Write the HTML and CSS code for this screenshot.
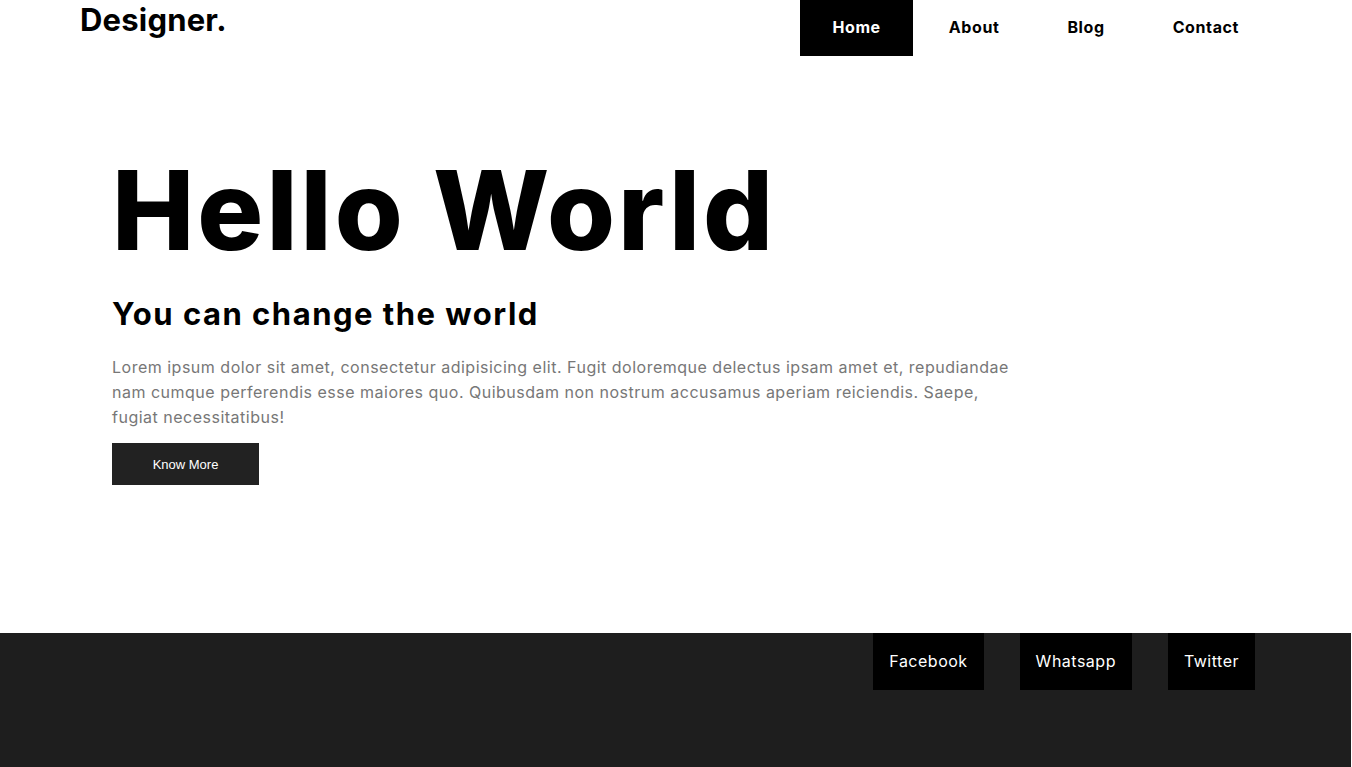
FILE: index.html
```html
<!DOCTYPE html>
<html lang="en">
<head>
<meta charset="utf-8">
<title>Designer.</title>
<link rel="stylesheet" href="styles.css">
</head>
<body>
<header class="topbar">
  <div class="logo">Designer.</div>
  <nav class="nav">
    <a class="nav-link active" href="#">Home</a>
    <a class="nav-link" href="#">About</a>
    <a class="nav-link" href="#">Blog</a>
    <a class="nav-link" href="#">Contact</a>
  </nav>
</header>
<main class="hero">
  <h1 class="hero-title">Hello World</h1>
  <h2 class="hero-sub">You can change the world</h2>
  <p class="hero-text">Lorem ipsum dolor sit amet, consectetur adipisicing elit. Fugit doloremque delectus ipsam amet et, repudiandae nam cumque perferendis esse maiores quo. Quibusdam non nostrum accusamus aperiam reiciendis. Saepe, fugiat necessitatibus!</p>
  <button class="btn">Know More</button>
</main>
<footer class="footer">
  <a class="social" href="#">Facebook</a>
  <a class="social" href="#">Whatsapp</a>
  <a class="social" href="#">Twitter</a>
</footer>
</body>
</html>
```
FILE: styles.css
```css
* { box-sizing: border-box; }
html, body { margin: 0; padding: 0; }
body {
  font-family: "Inter", "Open Sans", sans-serif;
  background: #fff;
  color: #000;
  width: 1351px;
}
a { text-decoration: none; color: inherit; }

.topbar {
  display: flex;
  justify-content: space-between;
  align-items: flex-start;
  height: 56px;
  padding: 0 80px 0 80px;
}
.logo {
  font-size: 31px;
  font-weight: 700;
  line-height: 40px;
  letter-spacing: 0.2px;
}
.nav {
  display: flex;
  gap: 4px;
}
.nav-link {
  display: block;
  padding: 0 32px;
  line-height: 55px;
  font-size: 16px;
  font-weight: 700;
  letter-spacing: 0.6px;
  color: #000;
}
.nav-link.active {
  background: #000;
  color: #fff;
  height: 56px;
}

.hero {
  height: 577px;
  padding: 89px 0 0 112px;
}
.hero-title {
  margin: 0;
  font-size: 110px;
  font-weight: 800;
  line-height: 130px;
  letter-spacing: 3px;
}
.hero-sub {
  margin: 15px 0 0;
  font-size: 31px;
  font-weight: 700;
  line-height: 48px;
  letter-spacing: 1.5px;
}
.hero-text {
  margin: 17px 0 0;
  width: 910px;
  font-size: 16px;
  line-height: 25px;
  letter-spacing: 0.5px;
  color: #777;
}
.btn {
  display: block;
  margin-top: 13px;
  width: 147px;
  height: 42px;
  border: none;
  background: #222;
  color: #fff;
  font-family: "Liberation Sans", Arial, sans-serif;
  font-size: 13px;
}

.footer {
  height: 134px;
  background: #1e1e1e;
  display: flex;
  justify-content: flex-end;
  align-items: flex-start;
  gap: 36px;
  padding-right: 96px;
}
.social {
  display: block;
  background: #000;
  color: #fff;
  font-size: 16px;
  line-height: 57px;
  padding: 0 16px;
  letter-spacing: 0.5px;
}
```
